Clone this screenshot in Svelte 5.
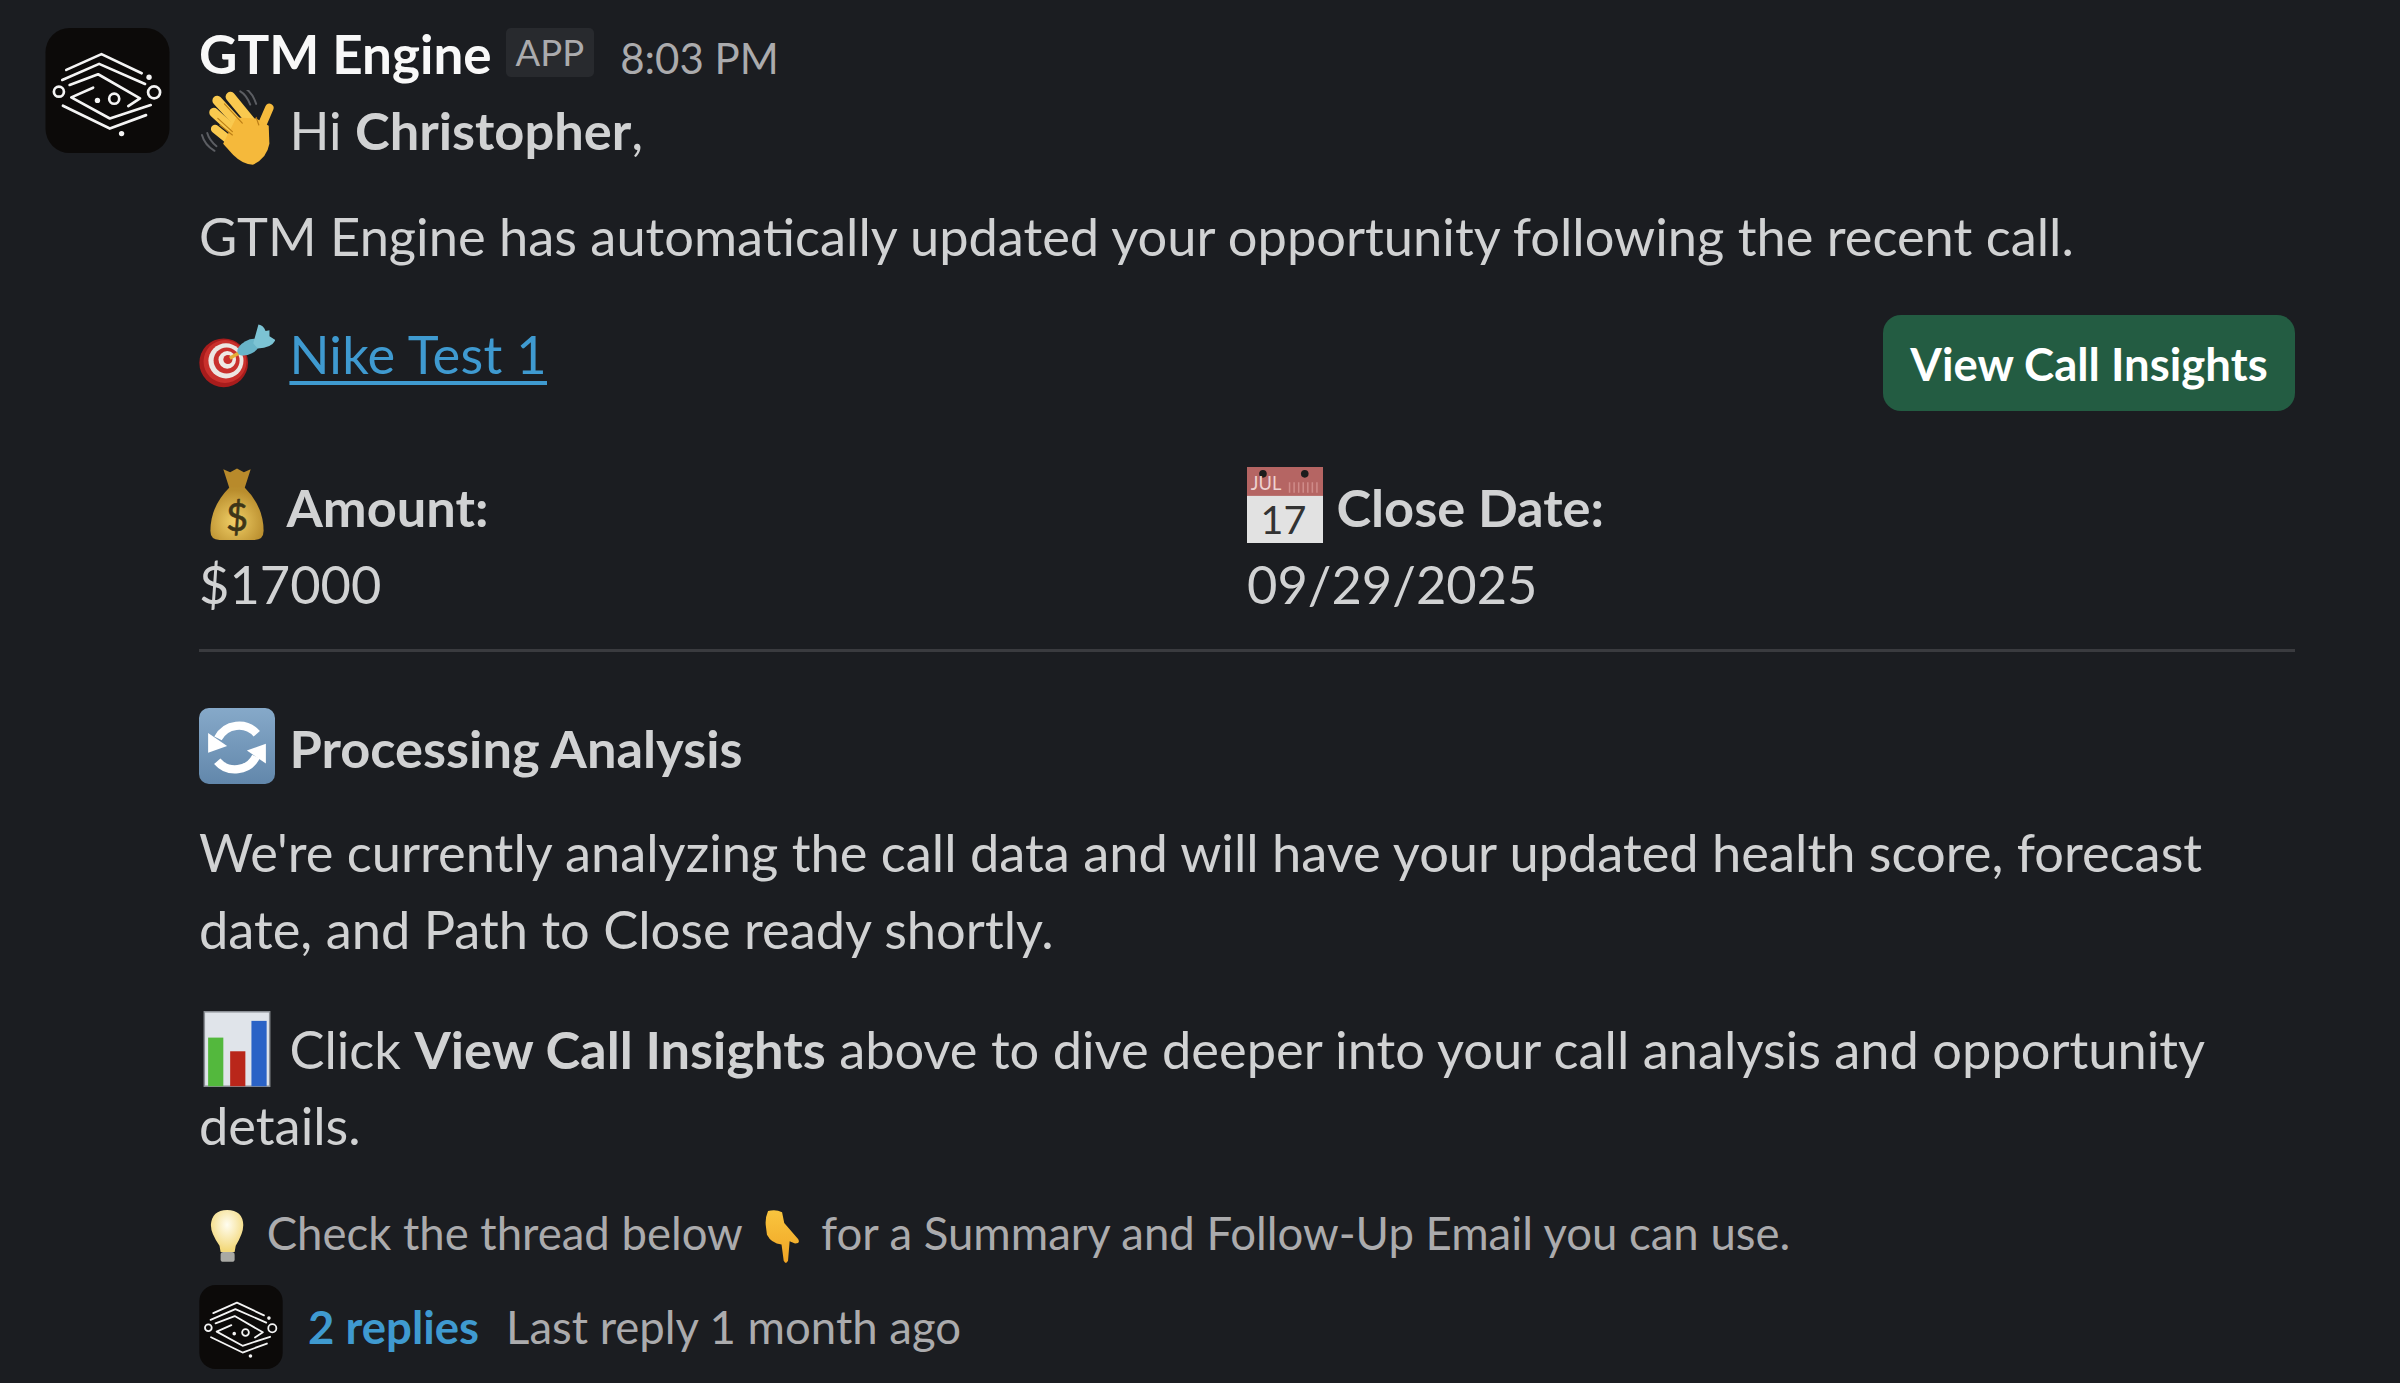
<script>
  const inner = 'M110 150 L215 103 L335 160 M98 180 L208 132 L345 192 M120 195 L205 163 L330 235 L295 258 M190 203 L125 232 L240 295 L362 255 M100 257 L240 325 L348 285';
</script>

{#snippet logo(cls)}
  <svg class={cls} viewBox="48 25 370 373" aria-hidden="true">
    <rect x="48" y="25" width="370" height="373" rx="72" fill="#0c0a09" />
    <path d={inner} fill="none" stroke="#f4f4f4" stroke-width="8" stroke-linecap="round" stroke-linejoin="round" />
    <g fill="none" stroke="#f4f4f4" stroke-width="8">
      <circle cx="88" cy="215" r="15" />
      <circle cx="372" cy="217" r="18" />
      <circle cx="253" cy="236" r="15" />
    </g>
    <g fill="#f4f4f4">
      <circle cx="357" cy="172" r="8" />
      <circle cx="203" cy="241" r="8" />
      <circle cx="275" cy="340" r="8" />
    </g>
  </svg>
{/snippet}

<main class="msg">
  {@render logo('avatar')}
  <div class="content">
    <header class="head">
      <strong class="name">GTM Engine</strong>
      <span class="badge">APP</span>
      <time class="time">8:03 PM</time>
    </header>

    <p class="line">
      <svg class="emoji wave" viewBox="27 42 230 230" aria-hidden="true">
        <g fill="none" stroke="#5c5e63" stroke-width="6" stroke-linecap="round">
          <path d="M165 36 Q188 48 200 84 M152 46 Q170 56 182 86" />
          <path d="M36 178 Q44 208 74 226 M52 172 Q58 194 80 212" />
        </g>
        <g fill="none" stroke="#f9c94f" stroke-linecap="round">
          <path stroke-width="29" d="M122 62 L182 135" />
          <path stroke-width="29" d="M82 74 L152 150" />
          <path stroke-width="28" d="M72 110 L140 172" />
          <path stroke-width="26" d="M76 160 L136 208" />
          <path stroke="#f6bb3d" stroke-width="26" d="M240 96 L214 156" />
        </g>
        <path fill="#f5b93b" d="M140 125 L200 128 L238 150 L240 205 Q232 250 190 268 Q160 268 130 238 L100 205 Z" />
        <path fill="none" stroke="#bb7d14" stroke-width="3.5" stroke-linecap="round" d="M104 84 L158 142 M84 128 L128 168 M90 148 L128 178 M200 125 L208 148" />
      </svg>
      Hi <b>Christopher</b>,
    </p>

    <p class="line intro">GTM Engine has automatically updated your opportunity following the recent call.</p>

    <section class="deal">
      <p class="line nike">
        <svg class="emoji target" viewBox="27 5 234 234" aria-hidden="true">
          <circle cx="103" cy="146" r="75" fill="#a81c1c" />
          <circle cx="107" cy="142" r="66" fill="#c9302c" />
          <circle cx="110" cy="140" r="54" fill="#ece6e2" />
          <circle cx="112" cy="139" r="40" fill="#c9302c" />
          <circle cx="114" cy="137" r="27" fill="#efe9e5" />
          <circle cx="116" cy="136" r="14" fill="#c9302c" />
          <path d="M122 132 L156 112" stroke="#e4ad38" stroke-width="10" />
          <ellipse cx="180" cy="98" rx="38" ry="21" transform="rotate(-28 180 98)" fill="#68b4c8" />
          <path d="M194 86 L210 28 Q226 30 232 48 L244 46 L244 64 L262 76 Q252 100 208 102 Z" fill="#7cc3d4" />
        </svg>
        <a href="#nike" class="link">Nike Test 1</a>
      </p>
      <button class="cta" type="button">View Call Insights</button>
    </section>

    <section class="fields">
      <div>
        <div class="line">
          <svg class="emoji bag lift" viewBox="0 0 100 100" aria-hidden="true">
            <defs>
              <radialGradient id="bag" cx=".45" cy=".65" r=".6"><stop offset="0" stop-color="#f0cf67" /><stop offset="1" stop-color="#b98d2d" /></radialGradient>
            </defs>
            <path fill="#b88a2b" d="M32 3 L41 7 L50 2 L59 7 L68 3 L60 28 L40 28 Z" />
            <path fill="url(#bag)" d="M40 27 L60 27 Q85 52 85 84 Q85 96 73 96 L27 96 Q15 96 15 84 Q15 52 40 27 Z" />
            <text class="dollar" x="50" y="84" text-anchor="middle">$</text>
          </svg>
          <b>Amount:</b>
        </div>
        <div class="line">$17000</div>
      </div>
      <div>
        <div class="line">
          <svg class="emoji cal lift" viewBox="0 0 100 100" aria-hidden="true">
            <rect x="0" y="0" width="100" height="100" fill="#e2e2e2" />
            <rect x="0" y="0" width="100" height="38" fill="#b56563" />
            <circle cx="21" cy="9" r="5" fill="#1c1c1c" /><circle cx="76" cy="9" r="5" fill="#1c1c1c" />
            <text class="jul" x="5" y="30">JUL</text>
            <g stroke="#cf8b89" stroke-width="2"><path d="M56 20 V34 M62 20 V34 M68 20 V34 M74 20 V34 M80 20 V34 M86 20 V34 M92 20 V34" /></g>
            <text class="day" x="48" y="88" text-anchor="middle">17</text>
          </svg>
          <b>Close Date:</b>
        </div>
        <div class="line">09/29/2025</div>
      </div>
    </section>

    <hr class="rule" />

    <p class="line section">
      <svg class="emoji lift" viewBox="0 0 100 100" aria-hidden="true">
        <defs>
          <linearGradient id="blue" x1="0" y1="0" x2="0" y2="1"><stop offset="0" stop-color="#86a9c9" /><stop offset="1" stop-color="#6287ab" /></linearGradient>
        </defs>
        <rect width="100" height="100" rx="13" fill="url(#blue)" />
        <g fill="#fff">
          <path fill="none" stroke="#fff" stroke-width="11" d="M76 34 A31 31 0 0 0 25 40" />
          <path d="M12 33 L37 50 L12 59 Z" />
          <path fill="none" stroke="#fff" stroke-width="11" d="M24 70 A31 31 0 0 0 75 64" />
          <path d="M88 73 L63 56 L88 47 Z" />
        </g>
      </svg>
      <b>Processing Analysis</b>
    </p>

    <p class="line para">We're currently analyzing the call data and will have your updated health score, forecast date, and Path to Close ready shortly.</p>

    <p class="line click">
      <svg class="emoji chart" viewBox="0 0 100 100" aria-hidden="true">
        <rect x="7" y="1" width="86" height="98" fill="#e0e4ea" stroke="#8b8f95" stroke-width="2" />
        <rect x="12" y="35" width="20" height="64" fill="#53b83d" />
        <rect x="41" y="53" width="20" height="46" fill="#b9261a" />
        <rect x="69" y="13" width="20" height="86" fill="#2a62c6" />
      </svg>
      Click <b>View Call Insights</b> above to dive deeper into your call analysis and opportunity <span>details.</span>
    </p>

    <p class="note">
      <svg class="emoji small" viewBox="0 0 100 100" aria-hidden="true">
        <defs>
          <radialGradient id="bulb" cx=".5" cy=".35" r=".6"><stop offset="0" stop-color="#fffdf0" /><stop offset="1" stop-color="#f3d97c" /></radialGradient>
        </defs>
        <g transform="translate(16 0)">
          <path fill="url(#bulb)" d="M36 0 Q65 0 66 28 Q66 44 52 66 L50 78 L24 78 L22 66 Q6 44 6 28 Q8 0 36 0 Z" />
          <rect x="24" y="78" width="26" height="18" rx="5" fill="#a9a9a4" />
        </g>
      </svg>
      Check the thread below
      <svg class="emoji small" viewBox="0 0 100 100" aria-hidden="true">
        <defs>
          <linearGradient id="hand2" x1="0" y1="0" x2="0" y2="1"><stop offset="0" stop-color="#f9c53f" /><stop offset="1" stop-color="#f0a424" /></linearGradient>
        </defs>
        <path fill="url(#hand2)" d="M26 2 Q40 -2 52 4 L56 24 L82 54 Q86 62 76 62 L66 58 L63 94 Q59 102 55 94 L51 64 Q32 62 24 46 L22 30 Q20 16 26 2 Z" />
      </svg>
      for a Summary and Follow-Up Email you can use.
    </p>

    <footer class="replies">
      {@render logo('mini')}
      <a href="#replies" class="count">2 replies</a>
      <span class="last">Last reply 1 month ago</span>
    </footer>
  </div>
</main>

<style>
  :global(body) {
    background: #1b1d21;
    margin: 0;
  }
  .msg {
    display: flex;
    gap: 29px;
    padding: 28px 105px 0 45px;
    height: 1355px;
    overflow: hidden;
    font-family: Lato, sans-serif;
    font-size: 52.4px;
    color: #d1d2d3;
  }
  .avatar {
    width: 125px;
    height: 125px;
    flex: none;
  }
  .content {
    flex: 1;
    min-width: 0;
  }
  .head {
    display: flex;
    align-items: baseline;
    height: 64px;
    line-height: 52px;
  }
  .name {
    color: #f8f8f8;
    font-weight: 700;
    font-size: 53px;
  }
  .badge {
    align-self: flex-start;
    margin-left: 14px;
    padding: 0 10px;
    height: 49px;
    line-height: 49px;
    font-size: 36.5px;
    color: #ababad;
    background: #282a2e;
    border-radius: 5px;
  }
  .time {
    margin-left: 26px;
    font-size: 42px;
    color: #ababad;
  }
  .line {
    margin: 0;
    line-height: 76.5px;
  }
  b {
    font-weight: 700;
  }
  .intro {
    margin-top: 29px;
  }
  .para {
    margin-top: 27.5px;
  }
  .click {
    margin-top: 43.5px;
  }
  .emoji {
    display: inline-block;
    width: 76px;
    height: 76px;
    margin: -24px 1px -20px 0;
    vertical-align: baseline;
  }
  .emoji.wave {
    margin-top: -28px;
    margin-bottom: -16px;
  }
  .emoji.lift {
    margin-top: -28px;
    margin-bottom: -16px;
  }
  .emoji.target {
    margin-top: -25px;
    margin-bottom: -19px;
  }
  .emoji.chart {
    margin-top: -26px;
    margin-bottom: -18px;
  }
  .emoji.bag {
    margin-right: -2px;
  }
  .emoji.cal {
    margin-right: 0;
  }
  .emoji.small {
    width: 54px;
    height: 54px;
    margin: -16px 2px -14px 0;
  }
  .dollar {
    font: 400 50px Lato, sans-serif;
    fill: #3d3518;
    stroke: #3d3518;
    stroke-width: 0.8px;
  }
  .jul {
    font: 400 24px Lato, sans-serif;
    fill: #eed2d0;
  }
  .day {
    font: 400 52px Lato, sans-serif;
    fill: #333;
  }
  .deal {
    display: flex;
    justify-content: space-between;
    align-items: flex-start;
    margin-top: 41px;
  }
  .nike {
    margin-top: 1px;
  }
  .link {
    color: #3f9ad0;
    letter-spacing: 0.3px;
    text-decoration: underline;
    text-decoration-thickness: 3.5px;
    text-underline-offset: 7px;
  }
  .cta {
    width: 412px;
    height: 96px;
    border: 0;
    border-radius: 18px;
    background: #235c42;
    color: #fff;
    font: 700 45.5px Lato, sans-serif;
  }
  .fields {
    display: grid;
    grid-template-columns: 1fr 1fr;
    margin-top: 58px;
  }
  .rule {
    margin: 27px 0 0;
    border: 0;
    height: 3px;
    background: #3a3b3f;
  }
  .section {
    margin-top: 58px;
  }
  .note {
    margin: 37px 0 0;
    line-height: 64px;
    font-size: 45.5px;
    color: #ababad;
  }
  .replies {
    display: flex;
    align-items: center;
    gap: 25px;
    margin-top: 20px;
    font-size: 45.5px;
  }
  .mini {
    width: 84px;
    height: 84px;
    flex: none;
  }
  .count {
    color: #3f9ad0;
    font-weight: 700;
    text-decoration: none;
  }
  .last {
    margin-left: 2px;
    color: #ababad;
  }
</style>
